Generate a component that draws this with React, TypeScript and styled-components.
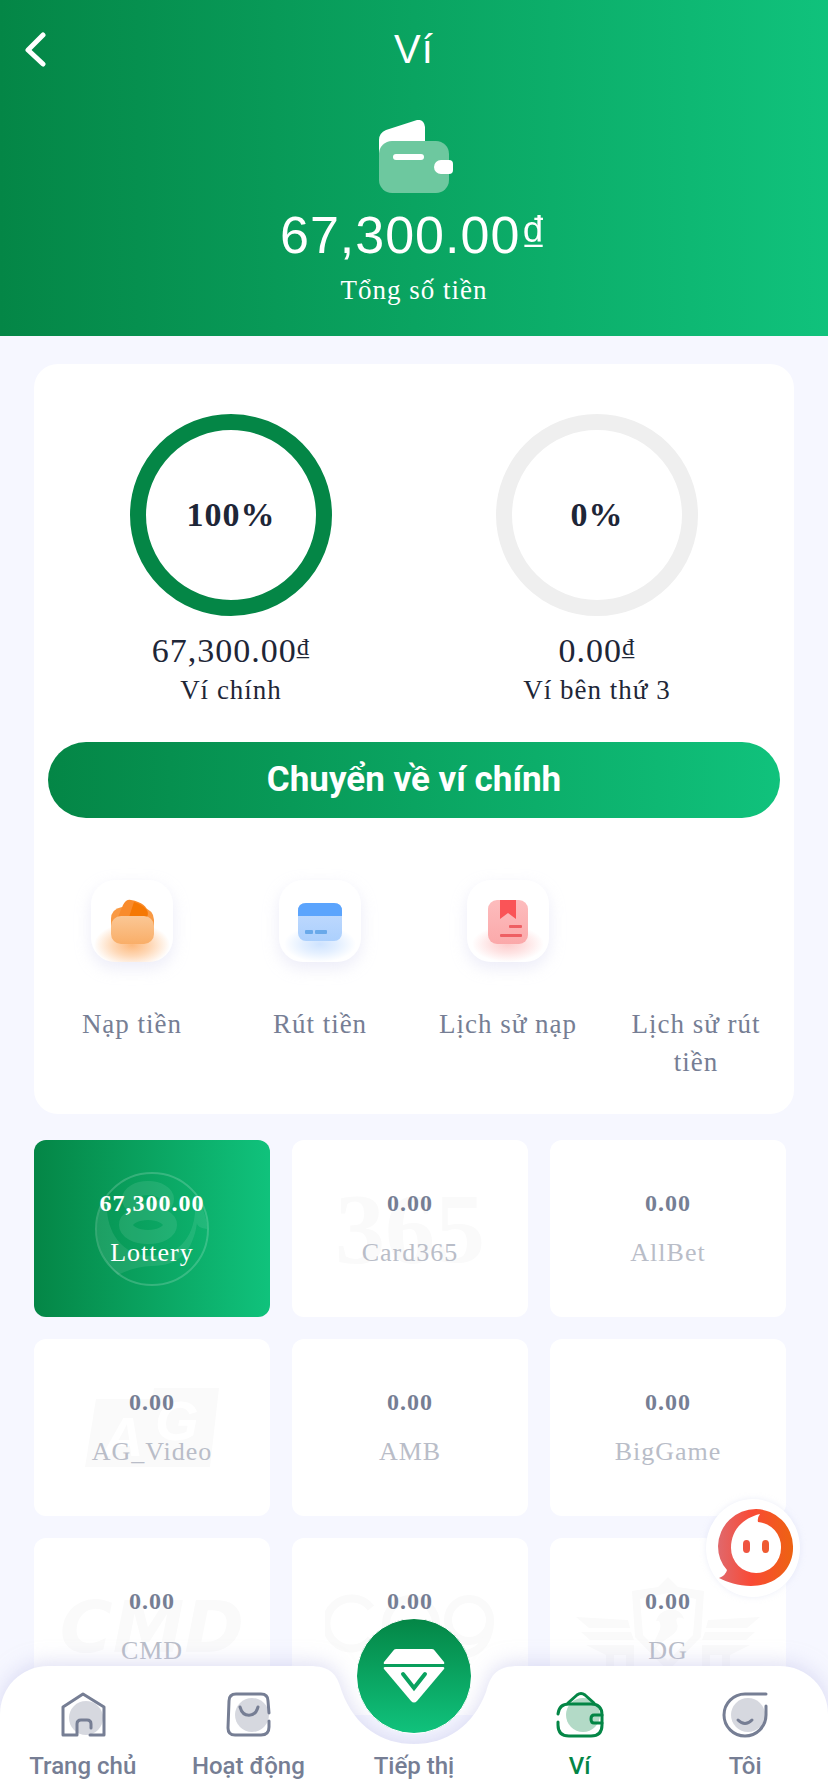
import React from "react";
import styled, { createGlobalStyle, css } from "styled-components";

const green = "#048646";
const greenRamp = "#048646, #10c27c";
const slate = "#767e94";
const serif = `"Liberation Serif", "Times New Roman", serif`;
const sans = `"Liberation Sans", Arial, sans-serif`;

const GlobalStyle = createGlobalStyle`
  * { box-sizing: border-box; }
  body { margin: 0; background: #f6f7ff; }
  button { border: 0; padding: 0; margin: 0; background: none; font: inherit; color: inherit; letter-spacing: inherit; cursor: pointer; }
  a { color: inherit; text-decoration: none; }
  h1, p { margin: 0; font-weight: 400; }
  svg { display: block; }
`;

const Shell = styled.div`
  position: relative;
  height: 100vh;
  overflow: hidden;
  background: #f6f7ff;
  font-family: ${serif};
  font-size: 27px;
  letter-spacing: 1px;
  color: #1e2637;
`;

const Scroller = styled.div`
  height: 100%;
  overflow-y: auto;
  scrollbar-width: none;
  padding-bottom: 160px;
`;

const Header = styled.header`
  height: 336px;
  background: linear-gradient(90deg, ${greenRamp});
  color: #fff;
  display: flex;
  flex-direction: column;
  align-items: center;
`;

const TitleBar = styled.div`
  width: 100%;
  height: 98px;
  display: grid;
  grid-template-columns: 72px 1fr 72px;
  align-items: center;
`;

const BackButton = styled.button`
  height: 72px;
  display: flex;
  align-items: center;
  padding-left: 24px;
`;

const Title = styled.h1`
  text-align: center;
  font: 400 40px/64px ${sans};
`;

const WalletArt = styled.div`
  height: 102px;
  padding-top: 22px;
`;

const Total = styled.p`
  font: 400 52px/70px ${sans};
`;

const TotalLabel = styled.p`
  line-height: 40px;
`;

const Card = styled.section`
  margin: 28px 34px 26px;
  padding: 50px 14px 33px;
  border-radius: 24px;
  background: #fff;
`;

const Wallets = styled.div`
  display: grid;
  grid-template-columns: 1fr 1fr;
`;

const Wallet = styled.div`
  display: flex;
  flex-direction: column;
  align-items: center;
`;

const Ring = styled.div<{ $full?: boolean }>`
  width: 202px;
  height: 202px;
  margin-bottom: 14px;
  border: 16px solid ${(p) => (p.$full ? green : "#efefef")};
  border-radius: 50%;
  display: flex;
  align-items: center;
  justify-content: center;
  font-size: 34px;
  font-weight: 700;
`;

const WalletAmount = styled.p`
  font-size: 34px;
  line-height: 42px;
`;

const Dong = styled.span`
  font-size: 24px;
  line-height: 1;
  vertical-align: 7px;
`;

const WalletName = styled.p`
  line-height: 36px;
`;

const TransferButton = styled.button`
  width: 100%;
  height: 76px;
  margin-top: 34px;
  border-radius: 38px;
  background: linear-gradient(90deg, ${greenRamp});
  color: #fff;
  font: 700 35px/72px Roboto, sans-serif;
  letter-spacing: 0;
`;

const Actions = styled.nav`
  margin: 62px -10px 0;
  display: grid;
  grid-template-columns: repeat(4, 1fr);
`;

const Action = styled.a`
  display: flex;
  flex-direction: column;
  align-items: center;
  padding: 0 12px;
  color: ${slate};
  line-height: 38px;
  text-align: center;
`;

const ActionTile = styled.span<{ $blank?: boolean }>`
  width: 82px;
  height: 82px;
  margin-bottom: 43px;
  border-radius: 24px;
  ${(p) =>
    !p.$blank &&
    css`
      background: #fff;
      box-shadow: 0 6px 16px rgba(208, 208, 237, 0.4);
    `}
`;

const Platforms = styled.div`
  margin: 0 42px 0 34px;
  display: grid;
  grid-template-columns: repeat(3, 1fr);
  gap: 22px;
`;

const Platform = styled.button<{ $active?: boolean }>`
  position: relative;
  height: 177px;
  border-radius: 12px;
  background: #fff;
  color: #b9bdc8;
  overflow: hidden;
  display: flex;
  flex-direction: column;
  align-items: center;
  padding-top: 41px;
  font-size: 26px;
  line-height: 44px;
  ${(p) =>
    p.$active &&
    css`
      background: linear-gradient(90deg, ${greenRamp});
      color: #fff;
    `}
`;

const PlatformAmount = styled.strong<{ $active?: boolean }>`
  position: relative;
  font-size: 24px;
  margin-bottom: 6px;
  color: ${(p) => (p.$active ? "#fff" : slate)};
`;

const PlatformName = styled.span`
  position: relative;
`;

const Watermark = styled.span`
  position: absolute;
  inset: 0;
  display: flex;
  align-items: center;
  justify-content: center;
`;

const ChatButton = styled.button`
  position: absolute;
  right: 28px;
  bottom: 195px;
  width: 94px;
  height: 98px;
  padding-left: 5px;
  border-radius: 50%;
  background: #fff;
  box-shadow: 0 0 6px rgba(200, 205, 235, 0.35);
  display: flex;
  align-items: center;
  justify-content: center;
`;

const TabBar = styled.nav`
  position: absolute;
  left: 0;
  right: 0;
  bottom: 0;
  height: 126px;
  display: grid;
  grid-template-columns: repeat(5, 1fr);
`;

const TabBack = styled.div`
  position: absolute;
  inset: 0;
  display: flex;
  filter: drop-shadow(0 -3px 10px rgba(190, 190, 232, 0.5));
`;

const TabBackSide = styled.div<{ $right?: boolean }>`
  flex: 1;
  background: #fff;
  border-radius: ${(p) => (p.$right ? "0 48px 0 0" : "48px 0 0 0")};
`;

const NotchShape = styled.svg`
  margin: 0 -1px;
`;

const Tab = styled.a<{ $active?: boolean }>`
  position: relative;
  display: flex;
  flex-direction: column;
  align-items: center;
  padding-top: 24px;
  gap: 8px;
  color: ${(p) => (p.$active ? green : slate)};
  font: 500 24px/40px Roboto, sans-serif;
  letter-spacing: 0;
  white-space: nowrap;
`;

const PromoTab = styled(Tab)`
  padding-top: 80px;
`;

const PromoDisc = styled.span`
  position: absolute;
  top: -48px;
  left: 50%;
  margin-left: -58px;
  width: 116px;
  height: 116px;
  border: 1px solid #fff;
  border-radius: 50%;
  background: linear-gradient(180deg, ${greenRamp});
  display: flex;
  align-items: center;
  justify-content: center;
`;

const WalletIcon = () => (
  <svg width="78" height="74" viewBox="-4 0 78 74">
    <path d="M0 36V20q0-7 7-10L38 0q7-1 8 7v18H14Q1 25 0 36z" fill="#fff" />
    <rect x="0" y="21" width="70" height="52" rx="13" fill="#6dc89f" />
    <rect x="14" y="34" width="31" height="6" rx="3" fill="#fff" />
    <path d="M62 40h8q4 0 4 4v6q0 4-4 4h-8a7 7 0 0 1 0-14z" fill="#fff" />
  </svg>
);

const Glow = ({ id, color }: { id: string; color: string }) => (
  <radialGradient id={id}>
    <stop offset="0" stopColor={color} stopOpacity="0.9" />
    <stop offset="0.5" stopColor={color} stopOpacity="0.5" />
    <stop offset="1" stopColor={color} stopOpacity="0" />
  </radialGradient>
);

const DepositIcon = () => (
  <svg width="82" height="82" viewBox="0 0 82 82">
    <defs>
      <Glow id="glowDeposit" color="#fdb16e" />
      <linearGradient id="bodyDeposit" x2="0" y2="1">
        <stop stopColor="#fbc795" />
        <stop offset="1" stopColor="#f9ae68" />
      </linearGradient>
      <clipPath id="clipDeposit"><rect width="82" height="82" rx="22" /></clipPath>
    </defs>
    <ellipse cx="41" cy="65" rx="38" ry="22" fill="url(#glowDeposit)" clipPath="url(#clipDeposit)" />
    <path d="M20 46V39q0-10 11-12h20q12 3 12 13v6z" fill="#f99943" />
    <path d="M27 37l5-12q3-6 8-5 16 3 17 13l-1 4z" fill="#f98b2c" />
    <path d="M38 37l5-15q7 2 12 7 3 4 1 8z" fill="#f57804" />
    <rect x="20" y="36" width="43" height="28" rx="10" fill="url(#bodyDeposit)" />
  </svg>
);

const WithdrawIcon = () => (
  <svg width="82" height="82" viewBox="0 0 82 82">
    <defs>
      <Glow id="glowWithdraw" color="#c9e0ff" />
      <linearGradient id="bodyWithdraw" x2="0" y2="1">
        <stop stopColor="#c3dbfe" />
        <stop offset="1" stopColor="#acd0fd" />
      </linearGradient>
    </defs>
    <ellipse cx="41" cy="64" rx="36" ry="18" fill="url(#glowWithdraw)" />
    <rect x="19" y="23" width="44" height="38" rx="8" fill="url(#bodyWithdraw)" />
    <path d="M19 36v-5q0-8 8-8h28q8 0 8 8v5z" fill="#5ba4fd" />
    <rect x="26" y="50" width="8" height="4" rx="1" fill="#69a9ea" />
    <rect x="36" y="50" width="12" height="4" rx="1" fill="#69a9ea" />
  </svg>
);

const HistoryIcon = () => (
  <svg width="82" height="82" viewBox="0 0 82 82">
    <defs>
      <Glow id="glowHistory" color="#fdc6c6" />
      <linearGradient id="bodyHistory" x2="0" y2="1">
        <stop stopColor="#fdbcbd" />
        <stop offset="1" stopColor="#fba9aa" />
      </linearGradient>
    </defs>
    <ellipse cx="41" cy="64" rx="36" ry="18" fill="url(#glowHistory)" />
    <rect x="21" y="20" width="40" height="44" rx="9" fill="url(#bodyHistory)" />
    <path d="M33 20h16v19l-8-6-8 6z" fill="#fa5457" />
    <rect x="42" y="45" width="13" height="3" rx="1" fill="#ee5f63" />
    <rect x="33" y="54" width="22" height="3" rx="1" fill="#ee5f63" />
  </svg>
);

const BallMark = () => (
  <svg width="114" height="114" viewBox="0 0 114 114" fill="#fff" fillOpacity="0.09">
    <circle cx="57" cy="57" r="56" fill="none" stroke="#fff" strokeOpacity="0.18" strokeWidth="2" />
    <path d="M2 57C2 40 8 28 13 24c-5 26 8 60 44 60s47-34 42-60c8 8 13 20 13 33-8-1-10-4-10-6-4 28-18 43-45 43-12 0-24 4-34 9C10 90 2 76 2 57z" />
    <g fill="none" stroke="#fff" strokeWidth="14" opacity="0.09">
      <ellipse cx="53" cy="27" rx="19" ry="11" />
      <ellipse cx="53" cy="53" rx="22" ry="12" />
    </g>
  </svg>
);

const MarkText = styled.span<{ $size: number; $wide?: boolean }>`
  font: ${(p) => (p.$wide ? "italic" : "normal")} 700 ${(p) => p.$size}px/1 ${(p) => (p.$wide ? `"DejaVu Sans", sans-serif` : serif)};
  color: #fafafa;
  letter-spacing: 0;
`;

const AgLetter = styled.text`
  font: italic 700 56px ${sans};
  letter-spacing: 0;
  fill: #fff;
`;

const AgMark = () => (
  <svg width="134" height="80" viewBox="0 0 134 80">
    <path d="M11 11h56L69 0h65l-9 79H0z" fill="#fafafa" />
    <AgLetter x="18" y="68">A</AgLetter>
    <AgLetter x="70" y="52">G</AgLetter>
  </svg>
);

const CqMark = () => (
  <svg width="170" height="66" viewBox="0 0 170 66" fill="none" stroke="#fafafa" strokeWidth="8">
    <path d="M46 14A25 25 0 1 0 46 45" />
    <circle cx="86" cy="30" r="25" />
    <circle cx="144" cy="26" r="21" />
    <path d="M165 26c0 20-10 32-24 34" />
  </svg>
);

const ShieldMark = () => (
  <svg width="184" height="100" viewBox="0 0 184 100" fill="#fafafa">
    <path d="M92 0l10 10 26 4-3 46-33 34-33-34-3-46 26-4z" />
    <path d="M92 16l28 6-3 36-25 26-25-26-3-36z" fill="#fff" />
    <path d="M80 44c4-14 24-16 28-2-6-3-9-1-7 4 4 12-13 14-21 26-6-10 9-18 3-28z" />
    <path d="M0 40l52 3 2 8-41 0zM5 55h50l3 8-44 0zM10 68h48v30h-8V78H38v20h-8V78zM184 40l-52 3-2 8h41zM179 55h-50l-3 8h44zM174 68h-48v30h8V78h12v20h8V78z" />
  </svg>
);

const HomeIcon = () => (
  <svg width="48" height="48" viewBox="0 0 48 48" fill="none" stroke="currentColor" strokeWidth="3" strokeLinecap="round" strokeLinejoin="round">
    <path d="M31 45h14V17L24 4 4 17v28h14V34q0-4 4-4h6q4 0 4 4v4" />
    <circle cx="27" cy="28" r="17" fill="currentColor" fillOpacity="0.3" stroke="none" />
  </svg>
);

const ActivityIcon = () => (
  <svg width="48" height="48" viewBox="0 0 48 48" fill="none" stroke="currentColor" strokeWidth="3" strokeLinecap="round">
    <path d="M45 23l-1-12q0-7-7-7H12q-7 0-7 7L4 38q0 7 7 7h26q8 0 8-8v-6" />
    <path d="M16 17c3 11 15 11 18 0" />
    <circle cx="28" cy="25" r="17" fill="currentColor" fillOpacity="0.3" stroke="none" />
  </svg>
);

const PurseIcon = () => (
  <svg width="48" height="48" viewBox="0 0 48 48" fill="none" stroke="currentColor" strokeWidth="3" strokeLinecap="round" strokeLinejoin="round">
    <path d="M2 24q1-10 11-10h22q11 0 11 11v10q0 11-11 11H13Q2 46 2 35v-3" />
    <path d="M12 13L21 5q4-3 8 0l9 8M46 25h-8q-3 0-3 4t3 4h8" />
    <circle cx="27" cy="25" r="17" fill="currentColor" fillOpacity="0.3" stroke="none" />
  </svg>
);

const ProfileIcon = () => (
  <svg width="48" height="48" viewBox="0 0 48 48" fill="none" stroke="currentColor" strokeWidth="3" strokeLinecap="round">
    <path d="M45 4H24A21 21 0 1 0 45 25V16" />
    <path d="M17 30q7 7 14 0" />
    <circle cx="27" cy="25" r="17" fill="currentColor" fillOpacity="0.3" stroke="none" />
  </svg>
);

const DiamondIcon = () => (
  <svg width="62" height="54" viewBox="0 0 62 54" fill="#fff">
    <path d="M13 0h36q2 0 3 2l9 11q1 2-1 2H2q-2 0-1-2L10 2q1-2 3-2z" />
    <path d="M2 18h58q2 0 1 2L34 52q-3 3-6 0L1 20q-1-2 1-2z" />
    <path d="M20 25l11 14 11-14" fill="none" stroke="#09a25f" strokeWidth="4" strokeLinecap="round" />
  </svg>
);

const ChatIcon = () => (
  <svg width="76" height="78" viewBox="0 0 76 78">
    <defs>
      <linearGradient id="chatRamp">
        <stop stopColor="#e0686c" />
        <stop offset="0.45" stopColor="#f94a35" />
        <stop offset="1" stopColor="#ed6311" />
      </linearGradient>
    </defs>
    <path d="M38 0a38 38 0 0 1 37 37C76 60 58 77 33 77 20 77 9 73 1 69q7-3 8-8Q0 51 0 37A38 38 0 0 1 38 0z" fill="url(#chatRamp)" />
    <path d="M13 39C13 21 25 9 42 5q-3 4-2 8a25 25 0 0 1 23 26 25 25 0 0 1-50 0z" fill="#fff" />
    <rect x="25" y="31" width="7" height="13" rx="4" fill="#ef5440" />
    <rect x="44" y="31" width="7" height="13" rx="4" fill="#ef5a30" />
  </svg>
);

const platforms: { name: string; amount: string; active?: boolean; mark?: React.ReactNode }[] = [
  { name: "Lottery", amount: "67,300.00", active: true, mark: <BallMark /> },
  { name: "Card365", amount: "0.00", mark: <MarkText $size={100}>365</MarkText> },
  { name: "AllBet", amount: "0.00" },
  { name: "AG_Video", amount: "0.00", mark: <AgMark /> },
  { name: "AMB", amount: "0.00" },
  { name: "BigGame", amount: "0.00" },
  { name: "CMD", amount: "0.00", mark: <MarkText $size={72} $wide>CMD</MarkText> },
  { name: "CQ9", amount: "0.00", mark: <CqMark /> },
  { name: "DG", amount: "0.00", mark: <ShieldMark /> },
];

export default function App() {
  return (
    <Shell>
      <GlobalStyle />
      <Scroller>
        <Header>
          <TitleBar>
            <BackButton aria-label="Quay lại">
              <svg width="24" height="36" viewBox="0 0 24 36" fill="none" stroke="#fff" strokeWidth="5" strokeLinecap="round" strokeLinejoin="round">
                <path d="M19 4L4 19l15 14" />
              </svg>
            </BackButton>
            <Title>Ví</Title>
          </TitleBar>
          <WalletArt><WalletIcon /></WalletArt>
          <Total>67,300.00₫</Total>
          <TotalLabel>Tổng số tiền</TotalLabel>
        </Header>

        <Card>
          <Wallets>
            <Wallet>
              <Ring $full>100%</Ring>
              <WalletAmount>67,300.00<Dong>₫</Dong></WalletAmount>
              <WalletName>Ví chính</WalletName>
            </Wallet>
            <Wallet>
              <Ring>0%</Ring>
              <WalletAmount>0.00<Dong>₫</Dong></WalletAmount>
              <WalletName>Ví bên thứ 3</WalletName>
            </Wallet>
          </Wallets>
          <TransferButton>Chuyển về ví chính</TransferButton>
          <Actions>
            <Action href="#deposit"><ActionTile><DepositIcon /></ActionTile>Nạp tiền</Action>
            <Action href="#withdraw"><ActionTile><WithdrawIcon /></ActionTile>Rút tiền</Action>
            <Action href="#deposit-history"><ActionTile><HistoryIcon /></ActionTile>Lịch sử nạp</Action>
            <Action href="#withdraw-history"><ActionTile $blank />Lịch sử rút tiền</Action>
          </Actions>
        </Card>

        <Platforms>
          {platforms.map((p) => (
            <Platform key={p.name} $active={p.active}>
              {p.mark && <Watermark aria-hidden>{p.mark}</Watermark>}
              <PlatformAmount $active={p.active}>{p.amount}</PlatformAmount>
              <PlatformName>{p.name}</PlatformName>
            </Platform>
          ))}
        </Platforms>
      </Scroller>

      <ChatButton aria-label="Hỗ trợ"><ChatIcon /></ChatButton>

      <TabBar>
        <TabBack>
          <TabBackSide />
          <NotchShape width="210" height="126" viewBox="0 0 210 126" fill="#fff">
            <path d="M0 0C22 0 28 8 33 26 46 60 72 78 105 78S164 60 177 26C182 8 188 0 210 0V126H0z" />
          </NotchShape>
          <TabBackSide $right />
        </TabBack>
        <Tab href="#home"><HomeIcon />Trang chủ</Tab>
        <Tab href="#activity"><ActivityIcon />Hoạt động</Tab>
        <PromoTab href="#promo"><PromoDisc><DiamondIcon /></PromoDisc>Tiếp thị</PromoTab>
        <Tab href="#wallet" $active><PurseIcon />Ví</Tab>
        <Tab href="#me"><ProfileIcon />Tôi</Tab>
      </TabBar>
    </Shell>
  );
}
